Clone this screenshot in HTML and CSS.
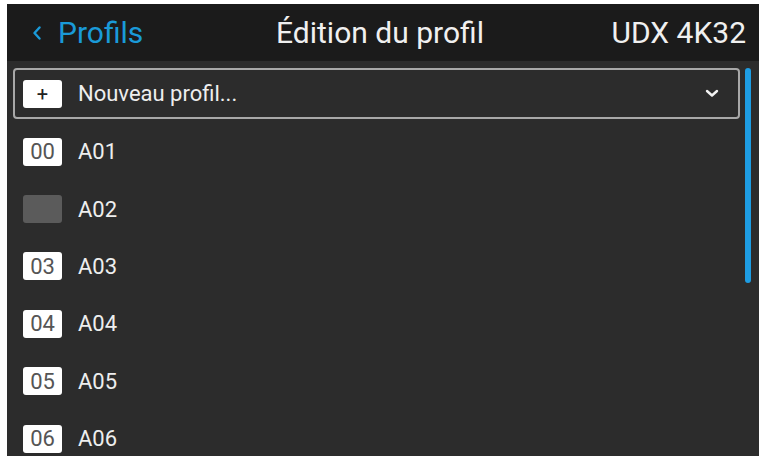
FILE: index.html
```html
<!DOCTYPE html>
<html lang="fr">
<head>
    <meta charset="UTF-8">
    <meta name="viewport" content="width=device-width, initial-scale=1.0">
    <title>Édition du profil</title>
    <link rel="stylesheet" href="styles.css">
</head>
<body>
    <div class="app">
        <div class="header">
            <div class="back">
                <svg class="back-icon" width="10" height="14" viewBox="0 0 10 14" fill="none">
                    <path d="M7.5 1.5L2.5 7l5 5.5" stroke="#1a9ad8" stroke-width="2.4" stroke-linecap="round" stroke-linejoin="round"/>
                </svg>
                <span>Profils</span>
            </div>
            <h1>Édition du profil</h1>
            <div class="device">UDX 4K32</div>
        </div>

        <div class="main">
            <div class="panel">
                <div class="select">
                    <span class="tag plus">+</span>
                    <span class="select-label">Nouveau profil...</span>
                    <svg class="select-arrow" width="14" height="9" viewBox="0 0 14 9" fill="none">
                        <path d="M2 2l5 4.5L12 2" stroke="#f2f2f2" stroke-width="2.4" stroke-linecap="round" stroke-linejoin="round"/>
                    </svg>
                </div>

                <div class="profile-list">
                    <div class="profile-row"><span class="tag">00</span><span class="profile-name">A01</span></div>
                    <div class="profile-row"><span class="tag empty"></span><span class="profile-name">A02</span></div>
                    <div class="profile-row"><span class="tag">03</span><span class="profile-name">A03</span></div>
                    <div class="profile-row"><span class="tag">04</span><span class="profile-name">A04</span></div>
                    <div class="profile-row"><span class="tag">05</span><span class="profile-name">A05</span></div>
                    <div class="profile-row"><span class="tag">06</span><span class="profile-name">A06</span></div>
                </div>
            </div>
            <div class="scroll-track">
                <div class="scroll-thumb"></div>
            </div>
        </div>
    </div>
</body>
</html>
```

FILE: styles.css
```css
body {
    margin: 0;
    padding: 4px 0 0 7px;
    background: #ffffff;
    font-family: Roboto, "Noto Sans", sans-serif;
    overflow: hidden;
}

.app {
    width: 752px;
    height: 452px;
    background: #2c2c2c;
    overflow: hidden;
    display: flex;
    flex-direction: column;
}

.header {
    height: 57px;
    flex-shrink: 0;
    background: #1b1b1b;
    display: grid;
    grid-template-columns: 1fr auto 1fr;
    align-items: center;
    padding: 0 13px 0 25px;
    color: #f0f0f0;
    font-size: 30px;
}

.back {
    display: flex;
    align-items: center;
    gap: 16px;
    color: #1a9ad8;
}

.back-icon {
    margin-top: 1px;
}

.header h1 {
    margin: 0;
    font-size: 30px;
    font-weight: 400;
    margin-left: -18px;
}

.device {
    justify-self: end;
}

.main {
    flex: 1;
    display: flex;
    padding-top: 7px;
}

.panel {
    flex: 1;
    padding-left: 6px;
}

.select {
    height: 51px;
    box-sizing: border-box;
    border: 2px solid #a8a8a8;
    border-radius: 4px;
    display: flex;
    align-items: center;
    padding: 0 19px 0 8px;
    color: #eeeeee;
    font-size: 22px;
}

.select-label {
    flex: 1;
    margin-left: 16px;
}

.tag {
    width: 39px;
    height: 28px;
    box-sizing: border-box;
    background: #ffffff;
    border-radius: 3px;
    color: #555555;
    font-size: 22px;
    display: flex;
    align-items: center;
    justify-content: center;
    flex-shrink: 0;
}

.tag.plus {
    color: #222222;
    font-size: 20px;
}

.tag.empty {
    background: #5b5b5b;
}

.profile-list {
    padding-top: 4px;
}

.profile-row {
    height: 57.4px;
    display: flex;
    align-items: center;
    padding-left: 10px;
    color: #eeeeee;
    font-size: 22px;
}

.profile-name {
    margin-left: 16px;
}

.scroll-track {
    width: 6px;
    margin: 0 8px 0 5px;
}

.scroll-thumb {
    height: 215px;
    background: #1e9de3;
    border-radius: 3px;
}
```
